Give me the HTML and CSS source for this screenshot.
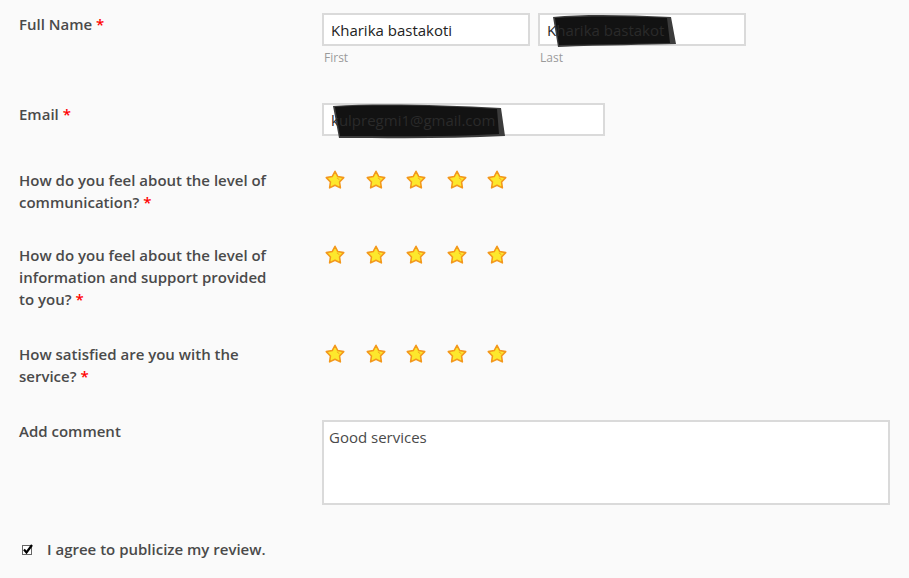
FILE: index.html
```html
<!DOCTYPE html>
<html lang="en">
<head>
  <meta charset="UTF-8" />
  <title>Review form</title>
  <link rel="stylesheet" href="styles.css">
</head>
<body>
  <form class="review-form">
    <div class="form-row row-name">
      <label class="field-label">Full Name <span class="req">*</span></label>
      <div class="name-fields">
        <div class="name-part">
          <div class="input">Kharika bastakoti</div>
          <div class="sub-label">First</div>
        </div>
        <div class="name-part">
          <div class="input redacted">
            <svg class="scribble" viewBox="0 0 130 34" preserveAspectRatio="none">
              <path d="M7 3 C40 0 80 1 125 3 L130 30 C100 31 60 31 12 33 Z" fill="#3c3c3c"/>
              <path d="M9 4 C40 2 80 2 121 4 L124 29 C95 30 60 30 13 31 Z" fill="#121212"/>
            </svg>
            <span class="hidden-text">Kharika bastakot</span>
          </div>
          <div class="sub-label">Last</div>
        </div>
      </div>
    </div>

    <div class="form-row">
      <label class="field-label">Email <span class="req">*</span></label>
      <div class="input email redacted">
        <svg class="scribble scribble-email" viewBox="0 0 175 36" preserveAspectRatio="none">
          <path d="M2 3 C50 0 110 2 170 5 L174 33 C120 36 60 35 8 35 Z" fill="#3c3c3c"/>
          <path d="M4 4 C50 1 110 3 166 6 L168 31 C120 34 60 33 9 33 Z" fill="#121212"/>
        </svg>
        <span class="hidden-text">kulpregmi1@gmail.com</span>
      </div>
    </div>

    <div class="form-row row-tight">
      <label class="field-label">How do you feel about the level of communication? <span class="req">*</span></label>
      <div class="stars" data-count="5"></div>
    </div>

    <div class="form-row">
      <label class="field-label">How do you feel about the level of information and support provided to you? <span class="req">*</span></label>
      <div class="stars" data-count="5"></div>
    </div>

    <div class="form-row">
      <label class="field-label">How satisfied are you with the service? <span class="req">*</span></label>
      <div class="stars" data-count="5"></div>
    </div>

    <div class="form-row">
      <label class="field-label">Add comment</label>
      <div class="textarea">Good services</div>
    </div>

    <div class="agree">
      <svg class="check" width="13" height="13" viewBox="0 0 13 13">
        <rect x="1.5" y="2.5" width="9" height="9" fill="#fff" stroke="#666" stroke-width="1"/>
        <path d="M3 6.5 L5.5 9.5 L11 2" fill="none" stroke="#000" stroke-width="2.2"/>
      </svg>
      <span>I agree to publicize my review.</span>
    </div>
  </form>

  <script>
    // star icon, repeated for each rating
    const starSvg =
      '<svg class="star" width="22" height="22" viewBox="0 0 24 24">' +
      '<path d="M12 2.5 L15.06 8.29 L21.51 9.41 L16.95 14.11 L17.88 20.59 L12 17.7 L6.12 20.59 L7.05 14.11 L2.49 9.41 L8.94 8.29 Z" ' +
      'fill="#fde82c" stroke="#f3981c" stroke-width="1.7" stroke-linejoin="round"/>' +
      '<path d="M14.4 9.9 Q16.3 10.3 16.6 11.9" fill="none" stroke="#f0a020" stroke-width="0.9" stroke-linecap="round"/>' +
      '</svg>';
    document.querySelectorAll('.stars').forEach(function (el) {
      const n = +el.dataset.count;
      el.innerHTML = starSvg.repeat(n);
    });
  </script>
</body>
</html>
```

FILE: styles.css
```css
:root {
  --bg: #fafafa;
  --text: #4a4a4a;
  --text-input: #222;
  --muted: #9a9a9a;
  --border: #dadada;
  --req: #f00;
}
body {
  margin: 0;
  background: var(--bg);
  color: var(--text);
  font-family: "Open Sans", "Noto Sans", sans-serif;
  font-size: 15px;
  line-height: 22px;
}
.review-form {
  padding: 13px 0 0 19px;
}
.form-row {
  display: grid;
  grid-template-columns: 303px 1fr;
  margin-bottom: 33px;
}
.form-row.row-name {
  margin-bottom: 37px;
}
.form-row.row-tight {
  margin-bottom: 31px;
}
.field-label {
  display: block;
  width: 255px;
  font-weight: 600;
}
.req {
  color: var(--req);
}
.name-fields {
  display: flex;
  gap: 8px;
}
.input {
  position: relative;
  box-sizing: border-box;
  width: 208px;
  height: 33px;
  padding: 4px 7px 0;
  background: #fff;
  border: 2px solid var(--border);
  color: var(--text-input);
  font-size: 15px;
  line-height: 22px;
  white-space: nowrap;
}
.input.email {
  width: 283px;
}
.hidden-text {
  position: relative;
  color: #2a2a2a;
}
.scribble {
  position: absolute;
  left: 6px;
  top: -1px;
  width: 130px;
  height: 34px;
}
.scribble-email {
  left: 7px;
  top: -2px;
  width: 175px;
  height: 36px;
}
.sub-label {
  margin-top: 4px;
  padding-left: 2px;
  font-size: 12px;
  line-height: 16px;
  color: var(--muted);
}
.stars {
  display: flex;
  gap: 18.5px;
  padding-left: 2px;
}
.star {
  display: block;
}
.textarea {
  box-sizing: border-box;
  width: 568px;
  height: 85px;
  padding: 4px 5px;
  background: #fff;
  border: 2px solid var(--border);
  color: var(--text);
}
.agree {
  display: flex;
  align-items: center;
  gap: 13px;
  padding-left: 2px;
  font-weight: 600;
}
.check {
  display: block;
}
```
